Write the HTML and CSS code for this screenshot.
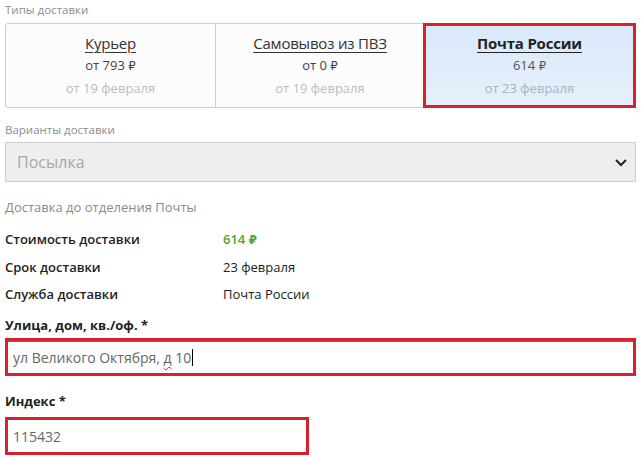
FILE: index.html
```html
<!DOCTYPE html>
<html lang="ru">
<head>
<meta charset="utf-8">
<link rel="stylesheet" href="styles.css">
</head>
<body>
<div class="page">
  <div class="label">Типы доставки</div>
  <div class="tabs">
    <div class="tab">
      <div class="tab-title">Курьер</div>
      <div class="tab-price">от 793 <span class="rub">₽</span></div>
      <div class="tab-date">от 19 февраля</div>
    </div>
    <div class="tab">
      <div class="tab-title">Самовывоз из ПВЗ</div>
      <div class="tab-price">от 0 <span class="rub">₽</span></div>
      <div class="tab-date">от 19 февраля</div>
    </div>
    <div class="tab tab-active">
      <div class="tab-title">Почта России</div>
      <div class="tab-price">614 <span class="rub">₽</span></div>
      <div class="tab-date">от 23 февраля</div>
    </div>
  </div>

  <div class="label label-variants">Варианты доставки</div>
  <div class="select">
    <span class="select-text">Посылка</span>
    <svg class="chevron" width="14" height="9" viewBox="0 0 14 9"><path d="M2 2 L7 7 L12 2" fill="none" stroke="#222" stroke-width="2"/></svg>
  </div>

  <div class="note">Доставка до отделения Почты</div>

  <div class="info">
    <div class="info-key">Стоимость доставки</div>
    <div class="info-val price">614 <span class="rub">₽</span></div>
    <div class="info-key">Срок доставки</div>
    <div class="info-val">23 февраля</div>
    <div class="info-key">Служба доставки</div>
    <div class="info-val">Почта России</div>
  </div>

  <div class="field-label">Улица, дом, кв./оф. *</div>
  <div class="input input-wide input-focus"><span class="spell">ул Великого Октября, <u class="squiggle">д</u> 10</span><span class="caret"></span></div>

  <div class="field-label field-label-index">Индекс *</div>
  <div class="input input-short">115432</div>
</div>
</body>
</html>
```
FILE: styles.css
```css
* { box-sizing: border-box; }
body {
  margin: 0;
  background: #fff;
  font-family: "Open Sans", "DejaVu Sans", sans-serif;
  color: #333;
}
.page {
  width: 642px;
  padding: 2px 6px 0 5px;
}
.label {
  font-size: 11.5px;
  color: #8c8c8c;
  line-height: 16px;
  height: 16px;
}
.tabs {
  margin-top: 5px;
  display: grid;
  grid-template-columns: 209px 209px 213px;
  height: 85px;
  border: 1px solid #d0d0d0;
  border-radius: 3px;
  background: #fcfcfc;
}
.tab {
  display: flex;
  flex-direction: column;
  align-items: center;
  padding-top: 8px;
  border-left: 1px solid #d0d0d0;
}
.tab:first-child { border-left: none; }
.tab-title {
  font-size: 15px;
  line-height: 22px;
  color: #333;
  text-decoration: underline;
  text-underline-offset: 3px;
  letter-spacing: -0.2px;
}
.tab-price {
  font-size: 13px;
  line-height: 22px;
  color: #444;
}
.tab-date {
  font-size: 13px;
  line-height: 22px;
  color: #bdbdbd;
}
.rub { font-family: "DejaVu Sans", sans-serif; font-size: 0.9em; }
.tab-active {
  margin: -1px 1px -1px -1px;
  border: 3px solid #d7222e;
  background: linear-gradient(#d9e8fb, #e6f0fc);
  padding-top: 6px;
}
.tab-active .tab-title { font-weight: 700; color: #222; }
.tab-active .tab-price { color: #555; }
.tab-active .tab-date { color: #aab3bd; }

.label-variants { margin-top: 14px; }
.select {
  margin-top: 4px;
  height: 40px;
  border: 1px solid #cfcfcf;
  background: #eeeeee;
  display: flex;
  align-items: center;
  justify-content: space-between;
  padding: 0 7px 0 11px;
}
.select-text { font-size: 16px; color: #a8a8a8; }
.note {
  margin-top: 17px;
  font-size: 13px;
  color: #8a8a8a;
  line-height: 16px;
}
.info {
  margin-top: 14px;
  display: grid;
  grid-template-columns: 218px 1fr;
  row-gap: 6px;
  font-size: 13px;
  line-height: 21px;
}
.info-key { font-weight: 600; color: #222; }
.info-val { color: #222; }
.price { color: #4aab29; font-weight: 600; }
.field-label {
  margin-top: 11px;
  font-size: 13px;
  font-weight: 700;
  color: #222;
  line-height: 18px;
}
.input {
  margin-top: 4px;
  height: 38px;
  border: 3px solid #d7222e;
  background: #fff;
  display: flex;
  align-items: center;
  padding-left: 5px;
  font-size: 14px;
  color: #666;
}
.input-wide { width: 631px; }
.input-focus { box-shadow: inset 0 1px 0 #4a74c9; }
.squiggle { text-decoration: underline wavy #d7222e; text-decoration-thickness: 1px; text-underline-offset: 3px; }
.caret { display: inline-block; width: 1px; height: 17px; background: #000; margin-left: 1px; }
.field-label-index { margin-top: 16px; }
.input-short { width: 304px; margin-top: 7px; }
```
